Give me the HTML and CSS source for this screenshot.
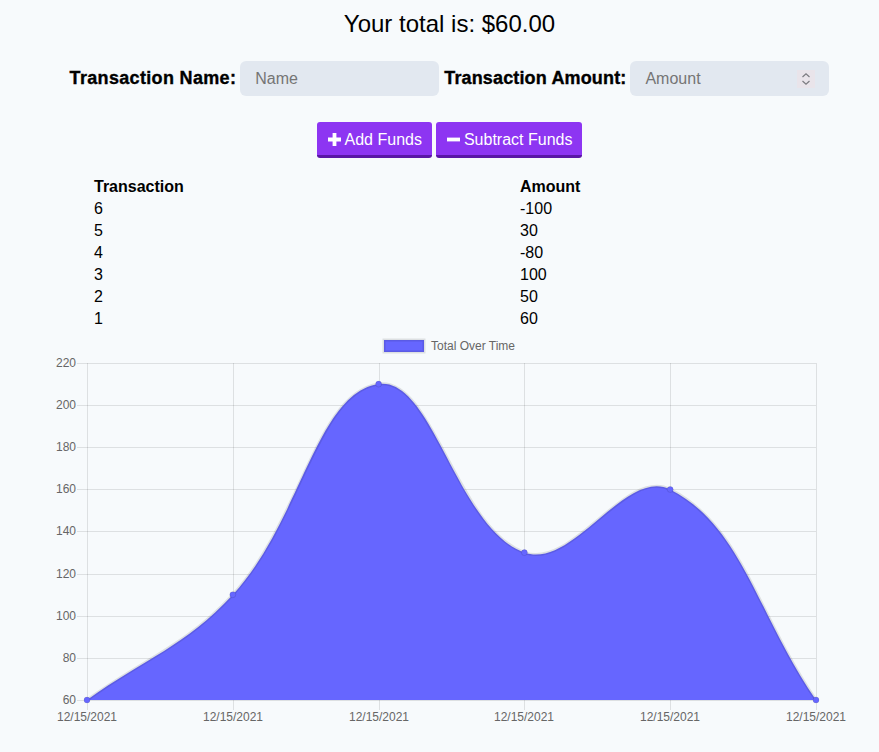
FILE: index.html
```html
<!DOCTYPE html>
<html lang="en">
<head>
<meta charset="utf-8">
<title>Budget Tracker</title>
<link rel="stylesheet" href="styles.css">
</head>
<body>
<div class="top">
  <h1 class="total">Your total is: <span>$60.00</span></h1>
  <div class="form">
    <label class="label label-1" for="t-name">Transaction Name:</label>
    <div class="field"><input id="t-name" class="input" type="text" placeholder="Name"></div>
    <label class="label label-2" for="t-amount">Transaction Amount:</label>
    <div class="field field-amount">
      <input id="t-amount" class="input" type="text" placeholder="Amount">
      <svg class="spin" width="18" height="18" viewBox="0 0 18 18" aria-hidden="true">
        <rect x="0" y="0" width="18" height="18" fill="#e9e4ea"/>
        <path d="M5.5 7 L9 3.8 L12.5 7" fill="none" stroke="#7b7b80" stroke-width="1.2"/>
        <path d="M5.5 11 L9 14.2 L12.5 11" fill="none" stroke="#7b7b80" stroke-width="1.2"/>
      </svg>
    </div>
  </div>
  <div class="buttons">
    <button class="btn" type="button">
      <svg class="ico" width="13" height="13" viewBox="0 0 13 13" aria-hidden="true"><path d="M4.6 0 H8.4 V4.6 H13 V8.4 H8.4 V13 H4.6 V8.4 H0 V4.6 H4.6 Z" fill="#fff"/></svg>
      Add Funds
    </button>
    <button class="btn" type="button">
      <svg class="ico" width="13" height="13" viewBox="0 0 13 13" aria-hidden="true"><rect x="0" y="4.6" width="13" height="3.8" fill="#fff"/></svg>
      Subtract Funds
    </button>
  </div>
  <table class="tx">
    <thead>
      <tr><th class="c1">Transaction</th><th>Amount</th></tr>
    </thead>
    <tbody>
      <tr><td class="c1">6</td><td>-100</td></tr>
      <tr><td class="c1">5</td><td>30</td></tr>
      <tr><td class="c1">4</td><td>-80</td></tr>
      <tr><td class="c1">3</td><td>100</td></tr>
      <tr><td class="c1">2</td><td>50</td></tr>
      <tr><td class="c1">1</td><td>60</td></tr>
    </tbody>
  </table>
</div>
<svg class="chart" width="879" height="422" viewBox="0 330 879 422" aria-label="Total Over Time chart">
  <g class="legend">
    <rect x="384" y="340" width="40" height="12" fill="#6666ff" stroke="rgba(0,0,0,0.1)" stroke-width="3"/>
    <text x="431" y="349.5">Total Over Time</text>
  </g>
  <g class="grid" shape-rendering="crispEdges">
    <line x1="77" y1="363" x2="816" y2="363"/>
    <line x1="77" y1="405" x2="816" y2="405"/>
    <line x1="77" y1="447" x2="816" y2="447"/>
    <line x1="77" y1="489" x2="816" y2="489"/>
    <line x1="77" y1="531" x2="816" y2="531"/>
    <line x1="77" y1="574" x2="816" y2="574"/>
    <line x1="77" y1="616" x2="816" y2="616"/>
    <line x1="77" y1="658" x2="816" y2="658"/>
    <line x1="77" y1="700" x2="816" y2="700"/>
    <line x1="87" y1="363" x2="87" y2="710"/>
    <line x1="233" y1="363" x2="233" y2="710"/>
    <line x1="379" y1="363" x2="379" y2="710"/>
    <line x1="524" y1="363" x2="524" y2="710"/>
    <line x1="670" y1="363" x2="670" y2="710"/>
    <line x1="816" y1="363" x2="816" y2="710"/>
  </g>
  <g class="ylabels">
    <text x="76" y="367">220</text>
    <text x="76" y="409">200</text>
    <text x="76" y="451">180</text>
    <text x="76" y="493">160</text>
    <text x="76" y="535">140</text>
    <text x="76" y="578">120</text>
    <text x="76" y="620">100</text>
    <text x="76" y="662">80</text>
    <text x="76" y="704">60</text>
  </g>
  <g class="xlabels">
    <text x="87" y="721">12/15/2021</text>
    <text x="233" y="721">12/15/2021</text>
    <text x="379" y="721">12/15/2021</text>
    <text x="524" y="721">12/15/2021</text>
    <text x="670" y="721">12/15/2021</text>
    <text x="816" y="721">12/15/2021</text>
  </g>
  <path class="area" d="M87,700 C145.32,657.88 184.69,646.82 232.8,594.7 C301.33,520.46 316.23,393.1 378.6,384.1 C432.87,376.27 456.31,528.01 524.4,552.6 C572.95,570.13 625.53,466.82 670.2,489.4 C742.17,525.78 757.68,615.76 816,700 Z"/>
  <path class="line" d="M87,700 C145.32,657.88 184.69,646.82 232.8,594.7 C301.33,520.46 316.23,393.1 378.6,384.1 C432.87,376.27 456.31,528.01 524.4,552.6 C572.95,570.13 625.53,466.82 670.2,489.4 C742.17,525.78 757.68,615.76 816,700"/>
  <g class="pts">
    <circle cx="87" cy="700" r="3"/>
    <circle cx="232.8" cy="594.7" r="3"/>
    <circle cx="378.6" cy="384.1" r="3"/>
    <circle cx="524.4" cy="552.6" r="3"/>
    <circle cx="670.2" cy="489.4" r="3"/>
    <circle cx="816" cy="700" r="3"/>
  </g>
</svg>
</body>
</html>
```

FILE: styles.css
```css
html, body {
  margin: 0;
  padding: 0;
}
body {
  background: #f7fafc;
  font-family: "Liberation Sans", Arial, Helvetica, sans-serif;
  color: #000;
  width: 879px;
  height: 752px;
  overflow: hidden;
}
.top {
  padding-left: 20px;
}
.total {
  margin: 0;
  padding-top: 10px;
  font-size: 24px;
  line-height: 28px;
  font-weight: normal;
  text-align: center;
}
.form {
  margin-top: 23px;
  display: flex;
  justify-content: center;
  align-items: center;
  height: 35px;
}
.label {
  font-size: 18px;
  line-height: 21px;
  font-weight: bold;
  -webkit-text-stroke: 0.35px #000;
  margin-right: 4px;
}
.label-1 {
  letter-spacing: 0.33px;
}
.label-2 {
  letter-spacing: 0.15px;
  margin-left: 5px;
}
.field {
  width: 199px;
  height: 35px;
  box-sizing: border-box;
  background: #e2e8f0;
  border-radius: 6px;
  display: flex;
  align-items: center;
  padding: 0 14px 0 15px;
}
.input {
  flex: 1;
  min-width: 0;
  border: none;
  outline: none;
  background: transparent;
  padding: 0;
  font-family: "Liberation Sans", Arial, sans-serif;
  font-size: 16px;
  line-height: 20px;
  color: #000;
}
.input::placeholder {
  color: #757575;
}
.spin {
  flex: none;
  display: block;
}
.buttons {
  margin-top: 26px;
  display: flex;
  justify-content: center;
  gap: 4px;
}
.btn {
  display: flex;
  align-items: center;
  gap: 4px;
  background: #8d35f2;
  color: #fff;
  border: none;
  border-bottom: 3px solid #5a16a6;
  border-radius: 3px;
  padding: 8px 10px 5px 11px;
  font-family: "Liberation Sans", Arial, sans-serif;
  font-size: 16px;
  line-height: 20px;
  height: 36px;
  box-sizing: border-box;
  cursor: pointer;
}
.ico {
  display: block;
  margin-top: -1px;
}
.tx {
  margin-top: 18px;
  margin-left: 74px;
  border-collapse: collapse;
  font-size: 16px;
  line-height: 22px;
}
.tx th, .tx td {
  padding: 0;
  text-align: left;
  height: 22px;
}
.tx th {
  font-weight: bold;
}
.tx .c1 {
  width: 426px;
}
.chart {
  display: block;
}
.chart text {
  font-family: "Liberation Sans", Arial, Helvetica, sans-serif;
  font-size: 12px;
  fill: #666;
}
.legend text {
  text-anchor: start;
}
.ylabels text {
  text-anchor: end;
}
.xlabels text {
  text-anchor: middle;
}
.grid line {
  stroke: rgba(0, 0, 0, 0.1);
  stroke-width: 1;
}
.area {
  fill: #6666ff;
  stroke: none;
}
.line {
  fill: none;
  stroke: rgba(0, 0, 0, 0.1);
  stroke-width: 3;
}
.pts circle {
  fill: #6666ff;
  stroke: rgba(0, 0, 0, 0.1);
  stroke-width: 1;
}
```
